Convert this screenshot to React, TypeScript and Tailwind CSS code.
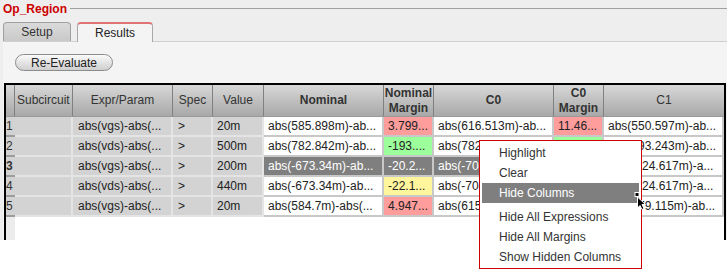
import React from "react";

type Row = {
  n: string;
  expr: string;
  value: string;
  nom: string;
  nm: string;
  nmBg: string;
  c0: string;
  c0m: string;
  c0mBg: string;
  c1: string;
  selected?: boolean;
};

const RED = "bg-[#ff9c9c]";
const GREEN = "bg-[#9cff9c]";
const YELLOW = "bg-[#fff59c]";

const rows: Row[] = [
  { n: "1", expr: "abs(vgs)-abs(...", value: "20m", nom: "abs(585.898m)-ab...", nm: "3.799...", nmBg: RED, c0: "abs(616.513m)-ab...", c0m: "11.46...", c0mBg: RED, c1: "abs(550.597m)-ab..." },
  { n: "2", expr: "abs(vds)-abs(...", value: "500m", nom: "abs(782.842m)-ab...", nm: "-193....", nmBg: GREEN, c0: "abs(782.815m)-ab...", c0m: "-108....", c0mBg: GREEN, c1: "abs(793.243m)-ab..." },
  { n: "3", expr: "abs(vgs)-abs(...", value: "200m", nom: "abs(-673.34m)-ab...", nm: "-20.2...", nmBg: "", c0: "abs(-704.42m)-ab...", c0m: "-21.5...", c0mBg: "", c1: "abs(-624.617m)-a...", selected: true },
  { n: "4", expr: "abs(vds)-abs(...", value: "440m", nom: "abs(-673.34m)-ab...", nm: "-22.1...", nmBg: YELLOW, c0: "abs(-704.42m)-ab...", c0m: "-23.4...", c0mBg: YELLOW, c1: "abs(-624.617m)-a..." },
  { n: "5", expr: "abs(vgs)-abs(...", value: "20m", nom: "abs(584.7m)-abs(...", nm: "4.947...", nmBg: RED, c0: "abs(615.36m)-abs(...", c0m: "5.120...", c0mBg: RED, c1: "abs(579.115m)-ab..." },
];

const SEL = "bg-[#7f7f7f] text-white";

function Cell({ className, children }: { className: string; children?: React.ReactNode }) {
  return (
    <div className={`h-[20px] pl-[4px] flex items-center whitespace-nowrap overflow-hidden border-b-2 border-r-2 ${className}`}>
      {children}
    </div>
  );
}

function HeaderCell({ children, bold, className = "" }: { children?: React.ReactNode; bold?: boolean; className?: string }) {
  return (
    <div
      className={`h-[32px] flex items-center justify-center text-center leading-[15px] text-[#333] bg-gradient-to-b from-[#d8d8d8] to-[#a8a8a8] border-r border-[#808080] border-b border-b-[#9a9a9a] ${bold ? "font-bold" : ""} ${className}`}
    >
      {children}
    </div>
  );
}

const menuItems = ["Highlight", "Clear", "Hide Columns"];
const menuItems2 = ["Hide All Expressions", "Hide All Margins", "Show Hidden Columns"];

export default function App() {
  return (
    <div className="relative w-[727px] h-[278px] bg-white text-[12px] text-[#222] font-['Liberation_Sans',Arial,sans-serif] overflow-hidden">
      <div className="h-[240px] bg-[#eeeeee] flex flex-col">
        <div className="h-[17px] flex items-center pl-[3px]">
          <span className="font-bold text-[#cc0000] leading-none">Op_Region</span>
          <div className="flex-1 h-px bg-[#a0a0a0] ml-[3px] mb-[1px]" />
        </div>

        <div className="mt-[4px] h-[20px] flex items-end pl-[3px] gap-[6px]">
          <div className="w-[68px] h-[19px] rounded-t-[4px] border border-b-0 border-[#a0a0a0] bg-gradient-to-b from-[#dadada] to-[#c9c9c9] flex items-center justify-center text-[#333]">
            Setup
          </div>
          <div className="w-[76px] h-[20px] rounded-t-[4px] border-x border-[#a8a8a8] border-t-2 border-t-[#e07474] bg-[#f4f4f4] flex items-center justify-center text-[#222] -mb-px relative">
            Results
          </div>
        </div>

        <div className="flex-1 ml-[3px] bg-[#f4f4f4] border-t border-[#d0d0d0] flex flex-col">
          <div className="pt-[12px] pl-[12px]">
            <button className="w-[98px] h-[17px] rounded-full border border-[#8c8c8c] bg-gradient-to-b from-[#fafafa] to-[#cfcfcf] flex items-center justify-center text-[#222] leading-none">
              Re-Evaluate
            </button>
          </div>

          <div className="mt-[12px] ml-[1px] w-[722px] flex-1 border-t-2 border-x-2 border-black bg-white">
            <div className="grid grid-cols-[9px_58px_100px_40px_51px_120px_50px_120px_50px_1fr]">
              <HeaderCell />
              <HeaderCell className="justify-start pl-[2px]">Subcircuit</HeaderCell>
              <HeaderCell>Expr/Param</HeaderCell>
              <HeaderCell>Spec</HeaderCell>
              <HeaderCell>Value</HeaderCell>
              <HeaderCell bold>Nominal</HeaderCell>
              <HeaderCell bold>
                Nominal
                <br />
                Margin
              </HeaderCell>
              <HeaderCell bold>C0</HeaderCell>
              <HeaderCell bold>
                C0
                <br />
                Margin
              </HeaderCell>
              <HeaderCell className="border-r-0">C1</HeaderCell>

              {rows.map((r) => (
                <React.Fragment key={r.n}>
                  <div className={`h-[20px] flex items-center bg-[#d2d2d2] border-b-2 border-[#9c9c9c] text-[#333] ${r.selected ? "font-bold" : ""}`}>
                    {r.n}
                  </div>
                  <Cell className="bg-[#d3d3d3] border-[#e4e4e4]" />
                  <Cell className="bg-[#d3d3d3] border-[#e4e4e4] pl-[5px]">{r.expr}</Cell>
                  <Cell className="bg-[#d3d3d3] border-[#e4e4e4] pl-[5px]">{r.selected ? ">" : ">"}</Cell>
                  <Cell className="bg-[#d3d3d3] border-[#e4e4e4] pl-[3px]">{r.value}</Cell>
                  <Cell className={`border-[#c8c8c8] ${r.selected ? SEL : "bg-white"}`}>{r.nom}</Cell>
                  <Cell className={`border-[#c8c8c8] ${r.selected ? SEL : r.nmBg}`}>{r.nm}</Cell>
                  <Cell className={`border-[#c8c8c8] ${r.selected ? SEL : "bg-white"}`}>{r.c0}</Cell>
                  <Cell className={`border-[#c8c8c8] ${r.selected ? SEL : r.c0mBg}`}>{r.c0m}</Cell>
                  <Cell className="border-[#c8c8c8] border-r-0 bg-white">{r.c1}</Cell>
                </React.Fragment>
              ))}
            </div>
            <div className="w-[9px] h-[23px] bg-[#ececec]" />
          </div>
        </div>
      </div>

      <div className="absolute left-[479px] top-[140px] w-[163px] h-[129px] border border-[#cc0000] bg-white pt-[2px] text-[#333]">
        {menuItems.map((m) => (
          <div
            key={m}
            className={`h-[20px] flex items-center ${m === "Hide Columns" ? "mx-[2px] pl-[17px] bg-[#7f7f7f] text-white" : "pl-[19px]"}`}
          >
            {m}
          </div>
        ))}
        <div className="h-[4px]" />
        {menuItems2.map((m) => (
          <div key={m} className="h-[20px] flex items-center pl-[19px]">
            {m}
          </div>
        ))}
      </div>

      <svg className="absolute left-[634px] top-[192px]" width="14" height="20" viewBox="0 0 14 20">
        <rect x="1" y="0.5" width="4" height="4" fill="black" stroke="white" strokeWidth="1" />
        <path d="M3.5 5 L3.5 16 L6 13.5 L8 17.5 L10 16.5 L8 12.5 L11.5 12.5 Z" fill="black" stroke="white" strokeWidth="1" />
      </svg>
    </div>
  );
}
